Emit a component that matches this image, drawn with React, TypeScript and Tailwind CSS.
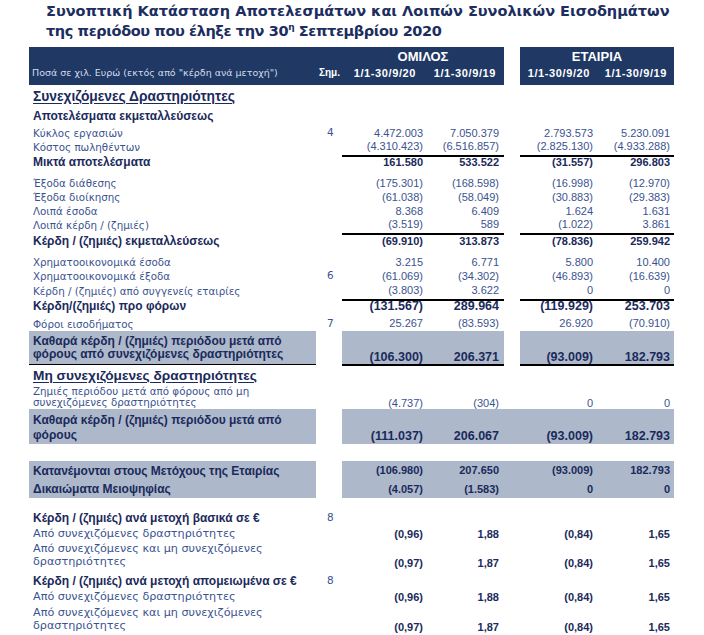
import React from "react";

const GRID = "grid grid-cols-[287px_26px_85px_77px_16px_77px_77px]";
const LBL = "font-['DejaVu_Sans',sans-serif] text-[10.3px] text-[#3a5390] whitespace-nowrap";
const BLD = "font-['Liberation_Sans',Arial,sans-serif] font-bold text-[12px] text-[#1b2a5c] whitespace-nowrap";
const NUM = "font-['Liberation_Sans',Arial,sans-serif] text-[11px] text-[#3a5390] whitespace-nowrap";
const NUMB = "font-['Liberation_Sans',Arial,sans-serif] font-bold text-[11px] text-[#1b2a5c] whitespace-nowrap";
const BAND = "bg-[#adb9ca]";

type V = [string, string, string, string];

function Row({
  label,
  note,
  v,
  h,
  lc = LBL,
  nc = NUM,
  line = false,
  mt = "",
}: {
  label: React.ReactNode;
  note?: string;
  v?: V;
  h: string;
  lc?: string;
  nc?: string;
  line?: boolean;
  mt?: string;
}) {
  const b = line ? "border-b-2 border-black" : "";
  return (
    <div className={`${GRID} ${h} ${mt}`}>
      <div className={`flex items-center pl-1 ${lc}`}>{label}</div>
      <div className={`flex items-center pl-[11px] ${LBL} text-[10.5px]`}>{note}</div>
      <div className={`flex items-center justify-end pr-1 ${nc} ${b}`}>{v?.[0]}</div>
      <div className={`flex items-center justify-end pr-[5px] ${nc} ${b}`}>{v?.[1]}</div>
      <div />
      <div className={`flex items-center justify-end pr-1 ${nc} ${b}`}>{v?.[2]}</div>
      <div className={`flex items-center justify-end pr-1 ${nc} ${b}`}>{v?.[3]}</div>
    </div>
  );
}

function TwoLineRow({
  l1,
  l2,
  note,
  v,
  mt,
}: {
  l1: string;
  l2: string;
  note?: string;
  v: V;
  mt: string;
}) {
  const nc = `flex items-end justify-end leading-[13px] ${NUMB} text-[11.5px]`;
  return (
    <div className={`${GRID} h-[28px] ${mt}`}>
      <div className={`flex flex-col pl-1 leading-[13px] ${LBL} text-[11.2px]`}>
        <span>{l1}</span>
        <span>{l2}</span>
      </div>
      <div className={`pl-[11px] ${LBL}`}>{note}</div>
      <div className={`${nc} pr-1`}>{v[0]}</div>
      <div className={`${nc} pr-[5px]`}>{v[1]}</div>
      <div />
      <div className={`${nc} pr-1`}>{v[2]}</div>
      <div className={`${nc} pr-1`}>{v[3]}</div>
    </div>
  );
}

function BandLine({
  label,
  v,
  h,
}: {
  label: string;
  v: V;
  h: string;
}) {
  const nc = `flex items-center justify-end ${BAND} ${NUMB} text-[11.5px]`;
  return (
    <div className={`${GRID} ${h}`}>
      <div className={`flex items-center pl-1 ${BAND} ${BLD} text-[11.6px]`}>{label}</div>
      <div />
      <div className={`${nc} pr-1`}>{v[0]}</div>
      <div className={`${nc} pr-[5px]`}>{v[1]}</div>
      <div className={BAND} />
      <div className={`${nc} pr-1`}>{v[2]}</div>
      <div className={`${nc} pr-1`}>{v[3]}</div>
    </div>
  );
}

export default function App() {
  const dateC = "font-['Liberation_Sans',Arial,sans-serif] font-bold text-[11px] tracking-[0.6px] leading-[16px] text-white text-right bg-[#1f3864]";
  const big = `flex items-end justify-end leading-[13px] ${NUMB} text-[12.5px]`;
  return (
    <div className="w-[704px] h-[635px] bg-white overflow-hidden">
      <div className="pt-[1px] pl-[46px] font-['DejaVu_Sans',sans-serif] font-bold text-[14.5px] leading-[20px] text-[#1c2e60] whitespace-nowrap">
        <div>Συνοπτική Κατάσταση Αποτελεσμάτων και Λοιπών Συνολικών Εισοδημάτων</div>
        <div className="tracking-[-0.4px]">
          της περιόδου που έληξε την 30<sup className="text-[9px] relative -top-[6px]">η</sup> Σεπτεμβρίου 2020
        </div>
      </div>

      <div className="ml-[29px] mt-[6px]">
        {/* header */}
        <div className={`${GRID} h-[18px]`}>
          <div className="bg-[#1f3864]" />
          <div className="bg-[#1f3864]" />
          <div className="col-span-2 bg-[#1f3864] text-center pt-[1px] font-['Liberation_Sans',Arial,sans-serif] font-bold text-[13px] leading-[18px] text-white">
            ΟΜΙΛΟΣ
          </div>
          <div />
          <div className="col-span-2 bg-[#1f3864] text-center pt-[1px] font-['Liberation_Sans',Arial,sans-serif] font-bold text-[13px] leading-[18px] text-white">
            ΕΤΑΙΡΙΑ
          </div>
        </div>
        <div className={`${GRID} h-[20px]`}>
          <div className="bg-[#1f3864] pl-[3px] font-['DejaVu_Sans',sans-serif] text-[9.5px] leading-[16px] text-[#d3dbeb] whitespace-nowrap">
            Ποσά σε χιλ. Ευρώ (εκτός από "κέρδη ανά μετοχή")
          </div>
          <div className="bg-[#1f3864] pl-[3px] font-['Liberation_Sans',Arial,sans-serif] font-bold text-[10px] leading-[16px] text-white">
            Σημ.
          </div>
          <div className={`${dateC} pr-[11px]`}>1/1-30/9/20</div>
          <div className={`${dateC} pr-[8px]`}>1/1-30/9/19</div>
          <div />
          <div className={`${dateC} pr-[7px]`}>1/1-30/9/20</div>
          <div className={`${dateC} pr-[7px]`}>1/1-30/9/19</div>
        </div>

        <Row
          h="h-[22px] pt-[2px]"
          lc={`${BLD} text-[13.8px] underline underline-offset-2`}
          label="Συνεχιζόμενες Δραστηριότητες"
        />
        <Row h="h-[18px]" lc={`${BLD} text-[12px]`} label="Αποτελέσματα εκμεταλλεύσεως" />
        <Row h="h-[13px]" label="Κύκλος εργασιών" note="4" v={["4.472.003", "7.050.379", "2.793.573", "5.230.091"]} />
        <Row h="h-[14px]" line label="Κόστος πωληθέντων" v={["(4.310.423)", "(6.516.857)", "(2.825.130)", "(4.933.288)"]} />
        <Row h="h-[20px]" lc={`${BLD} text-[12.4px]`} nc={NUMB} label="Μικτά αποτελέσματα" v={["161.580", "533.522", "(31.557)", "296.803"]} />
        <Row h="h-[14px]" mt="mt-[3px]" label="Έξοδα διάθεσης" v={["(175.301)", "(168.598)", "(16.998)", "(12.970)"]} />
        <Row h="h-[14px]" label="Έξοδα διοίκησης" v={["(61.038)", "(58.049)", "(30.883)", "(29.383)"]} />
        <Row h="h-[13px]" label="Λοιπά έσοδα" v={["8.368", "6.409", "1.624", "1.631"]} />
        <Row h="h-[15px]" line label="Λοιπά κέρδη / (ζημιές)" v={["(3.519)", "589", "(1.022)", "3.861"]} />
        <Row h="h-[20px]" lc={`${BLD} text-[11.2px]`} nc={`${NUMB} text-[11.5px]`} label="Κέρδη / (ζημιές) εκμεταλλεύσεως" v={["(69.910)", "313.873", "(78.836)", "259.942"]} />
        <Row h="h-[14px]" mt="mt-[3px]" label="Χρηματοοικονομικά έσοδα" v={["3.215", "6.771", "5.800", "10.400"]} />
        <Row h="h-[14px]" label="Χρηματοοικονομικά έξοδα" note="6" v={["(61.069)", "(34.302)", "(46.893)", "(16.639)"]} />
        <Row h="h-[15px]" line lc={`${LBL} text-[9.9px]`} label="Κέρδη / (ζημιές) από συγγενείς εταιρίες" v={["(3.803)", "3.622", "0", "0"]} />
        <Row h="h-[18px]" lc={`${BLD} text-[12.5px]`} nc={`${NUMB} text-[12.5px]`} label="Κέρδη/(ζημιές) προ φόρων" v={["(131.567)", "289.964", "(119.929)", "253.703"]} />
        <Row h="h-[16px]" line label="Φόροι εισοδήματος" note="7" v={["25.267", "(83.593)", "26.920", "(70.910)"]} />

        {/* band 1 */}
        <div className={`${GRID} h-[35px]`}>
          <div className={`h-[34px] flex flex-col justify-center pl-1 leading-[13px] border-b border-black ${BAND} ${BLD} text-[12.6px]`}>
            <span>Καθαρά κέρδη / (ζημιές) περιόδου μετά από</span>
            <span>φόρους από συνεχιζόμενες δραστηριότητες</span>
          </div>
          <div />
          <div className={`${big} ${BAND} border-b-2 border-black pr-1`}>(106.300)</div>
          <div className={`${big} ${BAND} border-b-2 border-black pr-[5px]`}>206.371</div>
          <div />
          <div className={`${big} ${BAND} border-b-2 border-black pr-1`}>(93.009)</div>
          <div className={`${big} ${BAND} border-b-2 border-black pr-1`}>182.793</div>
        </div>

        <Row
          h="h-[19px]"
          lc={`${BLD} text-[13.7px] underline underline-offset-2`}
          label="Μη συνεχιζόμενες δραστηριότητες"
        />
        <div className={`${GRID} h-[24px]`}>
          <div className={`flex flex-col justify-center pl-1 leading-[11px] ${LBL} text-[9.8px]`}>
            <span>Ζημιές περιόδου μετά από φόρους από μη</span>
            <span>συνεχιζόμενες δραστηριότητες</span>
          </div>
          <div />
          <div className={`flex items-end justify-end pr-1 leading-[11px] ${NUM}`}>(4.737)</div>
          <div className={`flex items-end justify-end pr-[5px] leading-[11px] ${NUM}`}>(304)</div>
          <div />
          <div className={`flex items-end justify-end pr-1 leading-[11px] ${NUM}`}>0</div>
          <div className={`flex items-end justify-end pr-1 leading-[11px] ${NUM}`}>0</div>
        </div>

        {/* band 2 */}
        <div className={`${GRID} h-[35px]`}>
          <div className={`flex flex-col justify-end pb-[1px] pl-1 leading-[15px] ${BAND} ${BLD} text-[12.6px]`}>
            <span>Καθαρά κέρδη / (ζημιές) περιόδου μετά από</span>
            <span>φόρους</span>
          </div>
          <div />
          <div className={`${big} leading-[15px] ${BAND} pr-1`}>(111.037)</div>
          <div className={`${big} leading-[15px] ${BAND} pr-[5px]`}>206.067</div>
          <div className={BAND} />
          <div className={`${big} leading-[15px] ${BAND} pr-1`}>(93.009)</div>
          <div className={`${big} leading-[15px] ${BAND} pr-1`}>182.793</div>
        </div>

        {/* band 3 */}
        <div className="mt-[17px]">
          <BandLine h="h-[19px]" label="Κατανέμονται στους Μετόχους της Εταιρίας" v={["(106.980)", "207.650", "(93.009)", "182.793"]} />
          <BandLine h="h-[16px]" label="Δικαιώματα Μειοψηφίας" v={["(4.057)", "(1.583)", "0", "0"]} />
        </div>

        <Row h="h-[17px]" mt="mt-[13px]" lc={`${BLD} text-[12.4px]`} label="Κέρδη / (ζημιές) ανά μετοχή βασικά σε €" note="8" />
        <Row h="h-[12px]" lc={`${LBL} text-[11.2px]`} nc={`${NUMB} text-[11.5px]`} label="Από συνεχιζόμενες δραστηριότητες" v={["(0,96)", "1,88", "(0,84)", "1,65"]} />
        <TwoLineRow mt="mt-[4px]" l1="Από συνεχιζόμενες και μη συνεχιζόμενες" l2="δραστηριότητες" v={["(0,97)", "1,87", "(0,84)", "1,65"]} />
        <Row h="h-[17px]" mt="mt-[2px]" lc={`${BLD} text-[12.3px]`} label="Κέρδη / (ζημιές) ανά μετοχή απομειωμένα σε €" note="8" />
        <Row h="h-[12px]" lc={`${LBL} text-[11.2px]`} nc={`${NUMB} text-[11.5px]`} label="Από συνεχιζόμενες δραστηριότητες" v={["(0,96)", "1,88", "(0,84)", "1,65"]} />
        <TwoLineRow mt="mt-[5px]" l1="Από συνεχιζόμενες και μη συνεχιζόμενες" l2="δραστηριότητες" v={["(0,97)", "1,87", "(0,84)", "1,65"]} />
      </div>
    </div>
  );
}
